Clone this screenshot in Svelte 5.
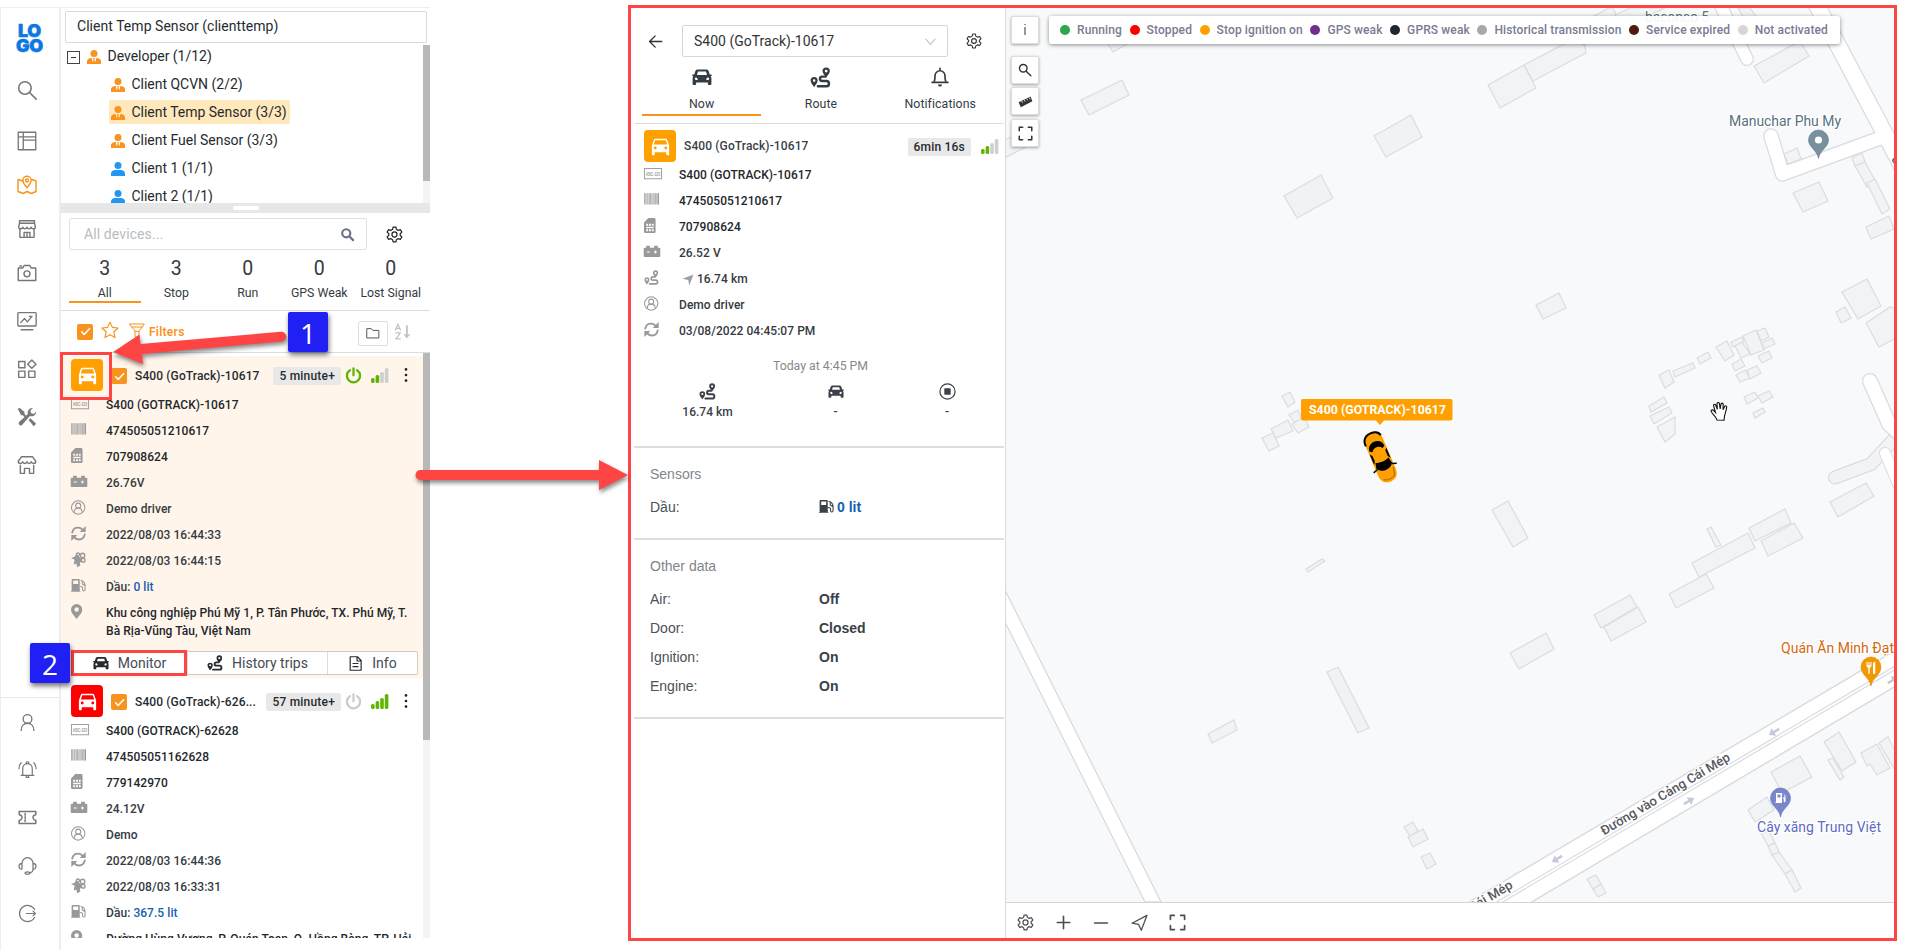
<script>
  const s = (inner, w = 1.6) =>
    `<g fill="none" stroke="currentColor" stroke-width="${w}" stroke-linecap="round" stroke-linejoin="round">${inner}</g>`;

  const icons = {
    search: s('<circle cx="9.5" cy="9.5" r="7.5"/><path d="M15 15 23 23"/>', 1.9),
    searchBold: s('<circle cx="10" cy="10" r="6.5"/><path d="M15.2 15.2 21 21"/>', 3.4),
    searchMap: s('<circle cx="9" cy="9" r="6.5"/><path d="M14 14 22 22"/>', 2.4),
    layout: s('<path d="M1.5 1.5h21v21h-21zM7.5 1.5v21M1.5 7h21M7.5 11h15"/>'),
    map: s('<path d="M7.5 7.5 1.2 5.4v14.4l6 2.4 5-2.4 5 2.4 5.6-2.4V7.2l-5-1.8"/><path d="M12 15.5C8.3 11 7 9 7 6.400a5 5 0 0 1 10 0C17 9 15.700 11 12 15.500z"/><circle cx="12" cy="6.500" r="1.800"/>', 1.7),
    shop: s('<path d="M3 2h18v3H3zM3 5 2 9.500c0 3 4.500 3 5 .3.500 2.700 4.500 2.700 5 0 .500 2.700 4.500 2.700 5 0 .500 2.700 5 2.700 5-.3L21 5M3.500 12.500V22h17v-9.500M8.500 22v-6h7v6M12 16v6"/>', 1.7),
    camera: s('<path d="M1.500 6h5.500l1.500-3h7L17 6h5.500v15h-21z"/><circle cx="12" cy="13" r="3.600"/><path d="M3.500 3.500h2"/>', 1.7),
    monitor: s('<rect x="1" y="2" width="22" height="16" rx="1"/><path d="M4.500 14 9 9l3.500 4L18 6.500M18 6.500h-3M5 22.500h14"/>', 1.6),
    widgets: s('<path d="M2 3h7.500v7.500H2zM2 14.500h7.500V22H2zM14 14.500h7.500V22H14zM17.800 1.200l5 5-5 5-5-5z"/>', 1.7),
    tools: '<path d="M1 2.500 3 1l6 5v2.500l4.500 4.300-2 2L7 10H5zM23 5.500a5.500 5.500 0 0 1-7.500 5.300L6 21.500A2.500 2.500 0 0 1 2.500 18L13 8.500A5.500 5.500 0 0 1 19 1.300l-3 3.200 1 3 3 .8zM14 15.500l2-2 7 6.500-3 3z" fill="currentColor"/>',
    store: s('<path d="M5.500 2h13l4 5.500c0 3.500-4.500 3.500-5.300.5-.700 3-4.500 3-5.200 0-.700 3-4.500 3-5.200 0C6 11 1.500 11 1.500 7.500zM4 12.500V22h5v-6h6v6h5v-9.500"/>', 1.7),
    user: s('<circle cx="12" cy="7.500" r="5.500"/><path d="M4 22c0-5 3-9 8-9s8 4 8 9"/>', 1.7),
    bellRing: s('<path d="M4 19.500h16M6 19.500v-9a6 6 0 0 1 12 0v9M10.500 4.500V2.500h3v2M10.500 20v2h3v-2M4 3.500C2 5.500 1.200 8 1.200 11M20 3.500c2 2 2.800 4.500 2.800 7.500"/>', 1.5),
    ticket: s('<path d="M1.500 4.500h21v4a3.500 3.500 0 0 0 0 7v4h-21v-4a3.500 3.500 0 0 0 0-7z"/><path d="M9 7v2M9 11v2M9 15v2"/>', 1.9),
    headset: s('<path d="M5 9.500a7 7.500 0 0 1 14 0M5 9.500v7c-5 .5-5-7.500 0-7zM19 9.500v7c5 .5 5-7.500 0-7zM19 16.500c0 3-2 4.500-4.500 5"/><ellipse cx="12" cy="21.500" rx="3" ry="1.500"/>', 1.6),
    logout: s('<path d="M21 7A10.200 10.200 0 1 0 21 17M10.500 12h11.500M19 9l3 3-3 3"/>', 1.5),
    gear: s('<circle cx="12" cy="12" r="3.600"/><path d="M10 1.500h4l.7 3.200 2.500 1.500 3.200-1 2 3.500L20 11v2l2.400 2.300-2 3.500-3.200-1-2.500 1.500-.7 3.200h-4l-.700-3.200-2.500-1.500-3.200 1-2-3.500L4 13v-2L1.600 8.700l2-3.500 3.200 1 2.500-1.500z"/>', 1.7),
    star: s('<path d="m12 1.500 3.200 7 7.600.8-5.700 5.100 1.600 7.600L12 18.200 5.300 22l1.600-7.600L1.200 9.300l7.600-.8z"/>', 1.6),
    funnel: s('<path d="M1 1.500h22l-8 11V23l-6-3v-7.500zM4.500 6h15M9 12.500h6"/>', 1.5),
    folder: s('<path d="M2 4.500h7l2.500 3H22v13H2z"/>', 1.7),
    sortAz: '<path d="M17 3h2.500v13H23l-5 6-4.700-6H17z" fill="currentColor"/>' + s('<path d="M2 10 5.500 1.500 9 10M3.300 7.500h4.400M2.500 14H9l-6.500 8.500H9"/>', 1.7),
    carFront: '<path fill-rule="evenodd" fill="currentColor" d="M18.900 5c-.2-.6-.8-1-1.400-1h-11c-.7 0-1.200.4-1.400 1L3 11v9c0 .6.400 1 1 1h1c.6 0 1-.4 1-1v-2h12v2c0 .6.400 1 1 1h1c.600 0 1-.4 1-1v-9zM6.500 15a1.500 1.500 0 1 1 0-3 1.500 1.500 0 0 1 0 3zm11 0a1.500 1.500 0 1 1 0-3 1.500 1.500 0 0 1 0 3zM5 10l1.500-4.500h11L19 10z"/>',
    car: '<path fill-rule="evenodd" fill="currentColor" d="M7 3h10c1.500 0 2.600.8 3.100 2.200L21.300 9h1.400c.8 0 1.200.6 1 1.300-.1.500-.5.800-1 .800h-.4c.700.700 1 1.500 1 2.400V20c0 .8-.6 1.500-1.500 1.500h-1.300c-.8 0-1.500-.6-1.500-1.500v-1.500H5V20c0 .9-.7 1.500-1.500 1.500H2.200c-.9 0-1.500-.7-1.500-1.500v-6.500c0-.9.300-1.700 1-2.400h-.4c-.5 0-.9-.3-1-.8C.100 9.600.500 9 1.300 9h1.400l1.200-3.800C4.400 3.800 5.500 3 7 3zM7.200 5.500 6 9.500h12l-1.200-4zM5 12.500a1.600 1.600 0 1 0 0 3.200c1 0 1.800 0 1.800-.8 0-1-.8-2.400-1.800-2.400zm14 0c-1 0-1.800 1.400-1.800 2.400 0 .8.8.8 1.800.8a1.600 1.600 0 1 0 0-3.200z"/>',
    route: '<path fill-rule="evenodd" fill="currentColor" d="M4.700 11.500a4 4 0 0 1 4 4c0 2.500-2.500 5.500-4 7.500-1.500-2-4-5-4-7.500a4 4 0 0 1 4-4zm0 2.500a1.500 1.500 0 1 0 0 3 1.500 1.500 0 0 0 0-3zM18.500.5a4.200 4.200 0 0 1 4.200 4.200c0 2.400-2.400 5-4.200 7-1.800-2-4.200-4.600-4.200-7A4.200 4.200 0 0 1 18.500.500zm0 2.500a1.600 1.600 0 1 0 0 3.200 1.600 1.600 0 0 0 0-3.200z"/>' + s('<path d="M17.500 11H14c-3.500 0-3.500 5 0 5h5c3.500 0 3.500 6 0 6H9"/>', 2.8),
    bell: s('<path d="M2.500 18.500h19M4.500 18.500C6 16.500 6 14 6 10.500a6 6 0 0 1 12 0c0 3.500 0 6 1.500 8M12 4V1.500"/>', 2) + '<path d="M9.500 21h5c-.3 2-1.300 2.500-2.500 2.500S9.800 23 9.500 21z" fill="currentColor"/>',
    back: s('<path d="M22 12H2.500M11.500 3 2.500 12l9 9"/>', 2.2),
    chevron: s('<path d="M2 6.500 12 18.500 22 6.500"/>', 2.4),
    doc: s('<path d="M3.500 1.200h11.500l6 6v15.600h-17.500zM14.500 1.500V8h6M8 12h8M8 17h8"/>', 1.9),
    power: s('<path d="M7 4.500a9.300 9.300 0 1 0 10 0M12 1.800v10"/>', 3.2),
    plate: '<rect x=".7" y="4" width="27.600" height="16.500" fill="none" stroke="currentColor" stroke-width="1.500"/><text x="3" y="15.500" font-size="8.500" font-family="Liberation Sans" font-weight="700" textLength="23" lengthAdjust="spacingAndGlyphs" fill="currentColor">ABC-123</text>',
    barcode: '<path fill="currentColor" opacity=".5" d="M0 2h2.500v18H0zM5 2h1v18H5zM8.500 2h3v18h-3zM14 2h1v18h-1zM17 2h3v18h-3z"/><path fill="currentColor" d="M22 2h2v18h-2z"/><path fill="currentColor" opacity=".45" d="M0 2h24v18H0z"/>',
    sim: '<path fill-rule="evenodd" fill="currentColor" d="M7 0h9c1.500 0 2.500 1 2.500 2.500v19c0 1.500-1 2.500-2.500 2.500H2.500C1 24 0 23 0 21.500V7zM3.500 9v3.500h3V9zm4.500 0v3.500h3V9zm4.500 0v3.500h3V9zM3.500 14v2.500h12V14zm0 4v3h3v-3zM8 18v3h3v-3zm4.500 0v3h3v-3z"/>',
    battery: '<path fill-rule="evenodd" fill="currentColor" d="M2.500 2.500h6V6h7V2.500h6V6H24c1 0 1.500.5 1.500 1.500v12c0 1-.500 1.500-1.500 1.500H0c-1 0-1.500-.5-1.500-1.500v-12C-1.500 6.500-1 6 0 6h2.500zM3.500 12v1.600h5V12zm13.200-1.700V12H15v1.600h1.700v1.700h1.600v-1.700H20V12h-1.700v-1.700z"/>',
    person: s('<circle cx="11.500" cy="12" r="10.700"/><circle cx="11.500" cy="9" r="4"/><path d="M5 19c.5-4 2-6 6.500-6s6 2 6.500 6"/>', 1.7),
    sync: s('<path d="M2 10.500C3 5 6.500 2.500 11 2.500c4 0 7 2 8.700 5.500M22 13.500C21 19 17.500 21.500 13 21.500c-4 0-7-2-8.700-5.500"/>', 3) + '<path d="M23.500 0v9.500H14zM.500 24v-9.500H10z" fill="currentColor"/>',
    satellite: '<path fill="currentColor" d="M0 9.500 5 8l4-4.500 8 7.500 1 3-4 3.500 1 4-5 3-1.500-6-4 1.500L5 16l1-3.500z"/>' + s('<circle cx="11" cy="4" r="2.500"/><circle cx="18.500" cy="5.500" r="3.500"/><circle cx="19.500" cy="13" r="3"/>', 2.2),
    fuel: '<path fill-rule="evenodd" fill="currentColor" d="M2.500 1.500h10c1 0 1.500.6 1.500 1.500v18.500H1V3c0-.9.500-1.500 1.500-1.500zM3.500 4v5.500h8V4zM0 21h15v1.500H0z"/>' + s('<path d="M16 3.500c4 1.500 6.500 4.500 6.500 8.500v6.500c0 3-4 3-4 0V16c0-2-1.500-2.500-3.500-2.500M18 5.500v4l4 2.500"/>', 1.7),
    pin: '<path fill-rule="evenodd" fill="currentColor" d="M9 0a9 9 0 0 1 9 9c0 5.500-5.500 9.500-9 15C5.500 18.500 0 14.500 0 9a9 9 0 0 1 9-9zm0 5.300a3.600 3.600 0 1 0 0 7.200 3.600 3.600 0 0 0 0-7.200z"/>',
    nav: '<path d="M1 9.500 23 1 14.500 23 12.500 12z" fill="currentColor"/>',
    navLine: s('<path d="M1.500 13 22.500 2 14.500 23 10.500 14.500z"/>', 1.8),
    stop: s('<circle cx="12" cy="12" r="10.700"/>', 1.7) + '<rect x="7.500" y="7.500" width="9" height="9" rx=".8" fill="currentColor"/>',
    corners: s('<path d="M2 7.500V2h5.500M16.500 2H22v5.500M22 16.500V22h-5.500M7.500 22H2v-5.500"/>', 2.4),
    ruler: '<path d="M1 13 20 4l3 7.500L4.500 21z" fill="currentColor"/><path d="m6 11 1.200 3M10 9l1.200 3M14 7l1.200 3M18 5.500l1.200 3" stroke="#fff" stroke-width="1.300"/>',
    plus: s('<path d="M12 2v20M2 12h20"/>', 2.6),
    minus: s('<path d="M1 12h22"/>', 2.6),
    manager: '<circle cx="12" cy="6" r="6" fill="currentColor"/><path fill="currentColor" d="M8 13.500c-5 0-8 2.500-8 6V24h24v-4.500c0-3.500-3-6-8-6l-2 8-1.200-5 .7-3h-3l.7 3-1.200 5z"/>',
    client: '<circle cx="12" cy="6" r="6" fill="currentColor"/><path fill="currentColor" d="M0 20c0-4 3-6.500 7.500-6.500h9c4.500 0 7.500 2.500 7.500 6.500v4H0z"/>',
    dots: '<g fill="currentColor"><circle cx="12" cy="2.500" r="2.300"/><circle cx="12" cy="12" r="2.300"/><circle cx="12" cy="21.500" r="2.300"/></g>',
    check: s('<path d="m5 12.500 4.500 5L19.500 7"/>', 3)
  };

  const navTop = [
    ['search', 27], ['layout', 31], ['map', 24], ['shop', 24], ['camera', 24],
    ['monitor', 28], ['widgets', 28], ['tools', 28], ['store', 28]
  ];
  const navBottom = [['user', 14], ['bellRing', 27], ['ticket', 28], ['headset', 28], ['logout', 28]];

  const tree = [
    { name: 'Client QCVN (2/2)', kind: 'manager' },
    { name: 'Client Temp Sensor (3/3)', kind: 'manager', active: true },
    { name: 'Client Fuel Sensor (3/3)', kind: 'manager' },
    { name: 'Client 1 (1/1)', kind: 'client' },
    { name: 'Client 2 (1/1)', kind: 'client' }
  ];

  const stats = [['3', 'All'], ['3', 'Stop'], ['0', 'Run'], ['0', 'GPS Weak'], ['0', 'Lost Signal']];

  const devices = [
    {
      title: 'S400 (GoTrack)-10617', ago: '5 minute+', color: '#ff9f00', on: true, bars: 2, selected: true,
      rows: [
        ['plate', 'S400 (GOTRACK)-10617'], ['barcode', '474505051210617'], ['sim', '707908624'],
        ['battery', '26.76V', 1], ['person', 'Demo driver', 1], ['sync', '2022/08/03 16:44:33', 1], ['satellite', '2022/08/03 16:44:15', 1]
      ],
      fuel: '0 lit',
      address: 'Khu công nghiệp Phú Mỹ 1, P. Tân Phước, TX. Phú Mỹ, T. Bà Rịa-Vũng Tàu, Việt Nam'
    },
    {
      title: 'S400 (GoTrack)-626...', ago: '57 minute+', color: '#ff0000', on: false, bars: 4,
      rows: [
        ['plate', 'S400 (GOTRACK)-62628'], ['barcode', '474505051162628'], ['sim', '779142970'],
        ['battery', '24.12V', 1], ['person', 'Demo', 1], ['sync', '2022/08/03 16:44:36', 1], ['satellite', '2022/08/03 16:33:31', 1]
      ],
      fuel: '367.5 lit',
      address: 'Đường Hùng Vương, P. Quán Toan, Q. Hồng Bàng, TP. Hải Phòng, Việt Nam'
    }
  ];

  const detail = [
    ['plate', 'S400 (GOTRACK)-10617'], ['barcode', '474505051210617'], ['sim', '707908624'],
    ['battery', '26.52 V', 1], ['route', '16.74 km', 1], ['person', 'Demo driver', 1], ['sync', '03/08/2022 04:45:07 PM', 1]
  ];
  const other = [['Air:', 'Off'], ['Door:', 'Closed'], ['Ignition:', 'On'], ['Engine:', 'On']];

  const legend = [
    ['#2ba84a', 'Running'], ['#ff0000', 'Stopped'], ['#ff9f00', 'Stop ignition on'], ['#6f2f8a', 'GPS weak'],
    ['#1f2830', 'GPRS weak'], ['#a9a9a9', 'Historical transmission'], ['#4d1a0d', 'Service expired'], ['#d6d6d6', 'Not activated']
  ];

  const buildings = [
    '1107,43 1113,52 1127,44 1120,34', '1081,100 1122,80 1129,95 1089,115',
    '1000,142 1026,131 1026,147 1000,160',
    '1488,85 1524,65 1536,88 1500,108', '1524,65 1583,34 1586,53 1533,81', '1575,26 1609,8 1613,8 1622,28 1583,45',
    '1615,15 1630,8 1665,8 1622,28', '1754,66 1800,41 1809,56 1764,83', '1738,8 1750,8 1770,35 1757,40',
    '1784,154 1797,148 1801,159 1788,164', '1793,193 1819,182 1828,201 1803,212',
    '1852,158 1862,153 1865,162 1855,166', '1855,166 1865,162 1875,180 1867,187', '1867,183 1875,179 1890,209 1882,214',
    '1866,227 1889,216 1894,229 1871,239', '1536,305 1559,293 1566,308 1543,319',
    '1842,292 1867,279 1881,306 1858,319', '1836,312 1845,307 1851,318 1841,323', '1866,323 1890,307 1898,309 1898,337 1879,347',
    '1282,396 1290,392 1295,402 1288,407', '1289,415 1298,410 1302,420 1294,422', '1271,429 1288,420 1293,431 1276,438',
    '1292,424 1304,417 1309,427 1298,433', '1262,438 1273,433 1279,446 1269,451',
    '1492,510 1508,501 1528,538 1513,547', '1306,569 1322,559 1325,561 1308,572',
    '1707,529 1711,527 1721,545 1716,547', '1692,563 1748,533 1755,548 1699,577', '1749,528 1785,509 1791,523 1755,541',
    '1761,541 1794,523 1803,538 1768,556', '1669,594 1706,574 1714,588 1676,608', '1830,502 1866,483 1874,496 1838,517',
    '1594,615 1630,595 1637,607 1601,628', '1604,627 1638,607 1646,622 1611,641',
    '1659,375 1669,370 1674,382 1665,388', '1673,371 1693,363 1695,368 1675,377', '1697,358 1708,352 1711,358 1700,364',
    '1716,347 1727,341 1734,355 1725,361', '1731,342 1742,337 1744,342 1733,347', '1735,346 1742,342 1750,354 1741,358',
    '1743,336 1756,330 1764,350 1751,355', '1757,331 1765,328 1769,337 1761,341', '1762,343 1772,338 1775,344 1764,349',
    '1758,356 1769,351 1772,358 1762,363', '1732,364 1741,359 1745,366 1735,371', '1736,375 1745,370 1750,378 1740,382',
    '1747,370 1757,366 1761,373 1750,379', '1744,397 1755,392 1758,398 1747,404', '1758,396 1769,391 1773,397 1762,403',
    '1753,413 1763,408 1765,412 1755,418', '1649,406 1664,397 1667,403 1651,412', '1650,416 1669,407 1672,413 1654,424',
    '1657,427 1675,417 1675,434 1665,442',
    '1510,653 1546,633 1554,649 1519,669', '1208,734 1234,720 1237,730 1212,743',
    '1587,879 1596,875 1601,884 1593,889', '1593,889 1601,884 1606,893 1598,897',
    '1771,772 1800,756 1812,777 1782,793', '1748,810 1767,797 1774,810 1755,822',
    '1761,833 1769,831 1775,843 1768,846', '1768,846 1775,843 1779,852 1772,855', '1772,855 1779,852 1792,870 1785,874',
    '1785,874 1792,870 1801,888 1795,892', '1824,742 1839,732 1856,762 1842,771', '1828,760 1833,758 1844,777 1840,780',
    '1861,753 1877,744 1890,768 1877,775 1870,764 1867,766', '1879,743 1888,737 1898,757 1898,775'
  ];
  const greenBuildings = [
    '1374,136 1411,115 1422,137 1386,157', '1284,196 1321,175 1333,198 1297,218',
    '1327,672 1338,667 1369,728 1358,733', '1404,827 1413,822 1418,831 1410,836',
    '1408,837 1423,829 1428,839 1413,847', '1421,857 1430,853 1436,864 1427,869'
  ];
  const roadArrows = [[1774, 732, 149], [1557, 859, 149], [1689, 801, -31], [1893, 680, -31]];
</script>

{#snippet icon(name, w = 16, h = w, vb = '0 0 24 24')}
  <svg class="ic" width={w} height={h} viewBox={vb}>{@html icons[name]}</svg>
{/snippet}

{#snippet rowIcon(name)}
  <span class="rowicon">
    {#if name === 'plate'}{@render icon('plate', 18, 15, '0 0 29 24')}
    {:else if name === 'battery'}{@render icon('battery', 16, 15, '-1 0 26 24')}
    {:else}{@render icon(name, 15)}{/if}
  </span>
{/snippet}

{#snippet signal(n)}
  <svg class="ic" width="18" height="15" viewBox="0 0 18 15">
    {#each [5, 8, 11, 15] as h, i}
      <rect x={i * 4.6} y={15 - h} width="3.600" height={h} rx="1.500" fill={i < n ? '#5fb404' : '#cfcfcf'} />
    {/each}
  </svg>
{/snippet}

<div class="page">
  <nav class="side">
    <div class="logo"><span>LO</span><span>GO</span></div>
    {#each navTop as [name, gap]}
      <div class="navitem" class:on={name === 'map'} style="margin-top:{gap}px">{@render icon(name, 20)}</div>
    {/each}
    <div class="bottomnav">
      {#each navBottom as [name, gap]}
        <div class="navitem" style="margin-top:{gap}px">{@render icon(name, 19)}</div>
      {/each}
    </div>
  </nav>

  <section class="devices">
    <div class="account">Client Temp Sensor (clienttemp)</div>
    <div class="tree">
      <div class="nodes">
        <div class="node root"><span class="toggle"></span><span class="who">{@render icon('manager', 14, 16, '0 0 24 24')}</span>Developer (1/12)</div>
        {#each tree as t}
          <div class="node" class:active={t.active}>
            <span class="who" class:blue={t.kind === 'client'}>{@render icon(t.kind, 14, 16)}</span>{t.name}
          </div>
        {/each}
      </div>
      <div class="track"><div class="thumb"></div></div>
    </div>
    <div class="splitter"><span></span></div>

    <div class="searchrow">
      <div class="search">All devices...<span>{@render icon('searchBold', 15)}</span></div>
      {@render icon('gear', 17)}
    </div>
    <div class="stats">
      {#each stats as [n, label], i}
        <div class="stat" class:on={i === 0}><b>{n}</b><span>{label}</span></div>
      {/each}
    </div>
    <div class="filters">
      <span class="cb">{@render icon('check', 13)}</span>
      <span class="o star">{@render icon('star', 18)}</span>
      <span class="o fun">{@render icon('funnel', 16)}</span>
      <b>Filters</b>
      <span class="folder">{@render icon('folder', 14)}</span>
      <span class="az">{@render icon('sortAz', 17)}</span>
    </div>

    <div class="list">
      <div class="cards">
        {#each devices as d}
          <article class="card" class:selected={d.selected}>
            <header>
              <span class="square" style="background:{d.color}">{@render icon('carFront', 23)}</span>
              <span class="cb">{@render icon('check', 13)}</span>
              <strong>{d.title}</strong>
              <span class="pill">{d.ago}</span>
              <span class="pw" class:live={d.on}>{@render icon('power', 17)}</span>
              {@render signal(d.bars)}
              <span class="dots">{@render icon('dots', 14)}</span>
            </header>
            {#each d.rows as [ic, text, soft]}
              <div class="row" class:soft>{@render rowIcon(ic)}{text}</div>
            {/each}
            <div class="row soft">{@render rowIcon('fuel')}Dầu:&nbsp;<em>{d.fuel}</em></div>
            <div class="row addr">{@render rowIcon('pin')}<span>{d.address}</span></div>
            {#if d.selected}
              <div class="actions">
                <span>{@render icon('car', 16)}<i>Monitor</i></span>
                <span>{@render icon('route', 16)}<i>History trips</i></span>
                <span>{@render icon('doc', 15)}<i>Info</i></span>
              </div>
            {/if}
          </article>
        {/each}
      </div>
      <div class="track"><div class="thumb"></div></div>
    </div>
  </section>

  <main class="frame">
    <section class="detail">
      <div class="pick">
        <span class="back">{@render icon('back', 15)}</span>
        <div class="select">S400 (GoTrack)-10617<span>{@render icon('chevron', 11)}</span></div>
        {@render icon('gear', 16)}
      </div>
      <div class="tabs">
        <div class="tab on">{@render icon('car', 20)}<span>Now</span></div>
        <div class="tab">{@render icon('route', 21)}<span>Route</span></div>
        <div class="tab">{@render icon('bell', 20)}<span>Notifications</span></div>
      </div>
      <div class="unit">
        <header>
          <span class="square" style="background:#ff9f00">{@render icon('carFront', 23)}</span>
          <strong>S400 (GoTrack)-10617</strong>
          <span class="pill">6min 16s</span>
          {@render signal(2)}
        </header>
        {#each detail as [ic, text, soft]}
          <div class="row" class:soft>
            {@render rowIcon(ic)}{#if ic === 'route'}<span class="navarrow">{@render icon('nav', 12)}</span>{/if}{text}
          </div>
        {/each}
        <div class="today">Today at 4:45 PM</div>
        <div class="totals">
          <div>{@render icon('route', 17)}<b>16.74 km</b></div>
          <div>{@render icon('car', 16, 17)}<b>-</b></div>
          <div>{@render icon('stop', 17)}<b>-</b></div>
        </div>
      </div>
      <div class="block sensors">
        <h3>Sensors</h3>
        <div class="kv"><span>Dầu:</span><b>{@render icon('fuel', 15)}<em>0 lit</em></b></div>
      </div>
      <div class="block">
        <h3>Other data</h3>
        {#each other as [k, v]}
          <div class="kv"><span>{k}</span><b>{v}</b></div>
        {/each}
      </div>
    </section>

    <section class="mapwrap">
      <div class="map">
        <svg class="canvas" width="888" height="894" viewBox="1006 8 888 894">
          <g fill="#f1f3f4" stroke="#dadce0" stroke-width="1.200">
            {#each buildings as p}<polygon points={p} />{/each}
          </g>
          <g fill="#eff3f4" stroke="#dadce0" stroke-width="1.200">
            {#each greenBuildings as p}<polygon points={p} />{/each}
          </g>
          <path d="M1898 435 1871 464 1835 477.500" fill="none" stroke="#d5d8de" stroke-width="14" stroke-linecap="round" stroke-linejoin="round" />
          <path d="M1898 435 1871 464 1835 477.500" fill="none" stroke="#f1f3f4" stroke-width="12" stroke-linecap="round" stroke-linejoin="round" />
          <g fill="none" stroke="#d9dbe1" stroke-linecap="round" stroke-linejoin="round">
            <path d="M1714 -8 1747 59" stroke-width="14" /><path d="M1813 -2 1905 172" stroke-width="18" />
            <path d="M1771 136 1782.500 174 1886 136" stroke-width="15.500" />
            <path d="M1870 381 1889 424 1902 436" stroke-width="16" /><path d="M1885 453 1904 498" stroke-width="12" />
          </g>
          <g fill="none" stroke="#fff" stroke-linecap="round" stroke-linejoin="round">
            <path d="M1714 -8 1747 59" stroke-width="11.500" /><path d="M1813 -2 1905 172" stroke-width="15.500" />
            <path d="M1771 136 1782.500 174 1886 136" stroke-width="13" />
            <path d="M1870 381 1889 424 1902 436" stroke-width="13.500" /><path d="M1885 453 1904 498" stroke-width="10" />
          </g>
          <path d="M1004 588 1161 902H1145L1004 620z" fill="#fff" stroke="#d9dbe1" stroke-width="1.300" />
          <path d="M1467 903 1896 650V686L1530 903z" fill="#fff" stroke="#dadce0" stroke-width="1.500" />
          <path d="M1495 903 1896 665.500M1501 903 1896 669" stroke="#d9dbe0" stroke-width="1.200" />
          {#each roadArrows as [x, y, r]}
            <path transform="translate({x} {y}) rotate({r})" d="M-6 -1.300H0V-4.500L6 0 0 4.500V1.300H-6z" fill="#c6c9de" />
          {/each}
          <g class="road">
            <text transform="translate(1604 835.500) rotate(-30.800)" textLength="148" lengthAdjust="spacingAndGlyphs">Đường vào Cảng Cái Mép</text>
            <text transform="translate(1471.500 912.500) rotate(-30.800)" textLength="49" lengthAdjust="spacingAndGlyphs">Cái Mép</text>
            <text transform="translate(1891 159) rotate(60)">d</text>
          </g>
          <g class="poi">
            <text x="1645" y="22" textLength="64" fill="#57717d">baconco 5</text>
            <text x="1729" y="126" textLength="112" fill="#57717d">Manuchar Phu My</text>
            <text x="1781" y="653" textLength="113" fill="#d2690e">Quán Ăn Minh Đạt</text>
            <text x="1757" y="832" textLength="124" fill="#5c6bc0">Cây xăng Trung Việt</text>
          </g>
          <path d="M1818.500 158.500C1817 150 1808.500 147 1808.500 140a10 10 0 0 1 20 0C1828.500 147 1820 150 1818.500 158.500z" fill="#78909c" stroke="#607d8b" stroke-width=".6" />
          <circle cx="1818.500" cy="140" r="3.600" fill="#fff" />
          <path d="M1871 686C1870 678 1861 675 1861 667a10 10 0 0 1 20 0C1881 675 1872 678 1871 686z" fill="#f29900" stroke="#e08a00" stroke-width=".6" />
          <path d="M1866.500 662v3.500c0 1.500 1 2 1.800 2.200v6h1.400v-6c.8-.2 1.800-.700 1.800-2.200V662h-1v3.300h-1V662h-1v3.300h-1V662zM1873 673.700V663.500c0-1 1.500-1.700 2.300-1.700v11.900z" fill="#fff" />
          <path d="M1780.500 817C1779.500 809 1770.500 806 1770.500 798a10 10 0 0 1 20 0C1790.500 806 1781.500 809 1780.500 817z" fill="#7986cb" stroke="#5c6bc0" stroke-width=".6" />
          <path fill-rule="evenodd" d="M1776 793h6v10h-6.500v-1.200h.5zM1777.500 794.500v3h3v-3zM1783 793.500l2.500 2v6c0 1-1.800 1-1.800 0v-3h-1v-1h1.800v-2z" fill="#fff" />

          <g class="tag">
            <path d="M1303 399h147.500a2 2 0 0 1 2 2v17.500a2 2 0 0 1-2 2H1384l-4 4.500-4-4.500h-73a2 2 0 0 1-2-2V401a2 2 0 0 1 2-2z" fill="#ff9f00" />
            <text x="1309" y="414" textLength="137" lengthAdjust="spacingAndGlyphs">S400 (GOTRACK)-10617</text>
          </g>
          <g transform="translate(1380.500 457) rotate(-23)">
            <path d="M-9.500 -17C-9.500 -24 -5 -26.500 0 -26.500S9.500 -24 9.500 -17V16C9.500 24 5 26.500 0 26.500S-9.500 24 -9.500 16z" fill="#ff9f00" />
            <path d="M-9.300 -15.500C-9.800 -23 -5 -25.700 0 -25.700S8 -24.500 8.800 -20" fill="none" stroke="#000" stroke-width="2" />
            <path d="M-8 -9C-8 -19 8 -19 8 -9L5.500 -7.500C3 -11.500 -3 -11.500 -5.500 -7.500zM-7 3.500C-3 5.500 3 5.500 7 3.500L8.500 9.500C5 15.500 -5 15.500 -8.500 9.500zM-9 -6.500l2 2.500V2l-2 3zM9 -6.500l-2 2.500V2l2 3z" fill="#000" />
            <path d="M-12.500 12 -8 10.500M12.500 12 8 10.500" stroke="#000" stroke-width="1.500" />
            <path d="M-6 22C-3 24.500 3 24.500 6 22L8 14" fill="none" stroke="#8a5a00" stroke-width=".7" />
          </g>
          <path d="M1716.500 419.500C1715 415 1711 413 1710.500 410.500c.5-1.500 2-1.500 3 0l1.500 1.500-2-7c0-1.700 1.800-1.700 2.300-.3l1.500 4-.300-5.700c.3-1.400 2-1.400 2.400 0l.8 5.500.8-5c.5-1.200 2-1.200 2.200.2l-.2 5.500 1.700-3.500c.9-.9 2.200-.2 2 1-.7 5-1.700 6-2.200 9l-.5 4z" transform="translate(.5 .5)" fill="#fff" stroke="#111" stroke-width="1.100" />
        </svg>
        <div class="mapbtns">
          <span class="first">i</span>
          <span>{@render icon('searchMap', 14)}</span>
          <span>{@render icon('ruler', 15)}</span>
          <span class="last">{@render icon('corners', 15)}</span>
        </div>
        <div class="legend">
          {#each legend as [c, label]}
            <span><i style="background:{c}"></i>{label}</span>
          {/each}
        </div>
      </div>
      <div class="mapbar">
        {@render icon('gear', 17)}{@render icon('plus', 15)}{@render icon('minus', 14)}{@render icon('navLine', 17)}{@render icon('corners', 17)}
      </div>
    </section>
  </main>

  <div class="mark box1"></div>
  <div class="mark box2"></div>
  <svg class="arrows" width="640" height="500" viewBox="0 0 640 500">
    <g class="shade" fill="#ff4444">
      <path d="M113 352 139.500 334.500 140.500 344 281 331.800a4.800 4.800 0 0 1 .9 9.700L142 354l1 10z" />
      <path d="M420.500 470H599V460L628 475 599 490V480H420.500a5 5 0 0 1 0-10z" />
    </g>
  </svg>
  <div class="step one">1</div>
  <div class="step two">2</div>
</div>

<style>
  :global(body) { margin: 0; background: #fff; }
  .page { position: relative; width: 1905px; height: 950px; overflow: hidden; display: flex; box-sizing: border-box; padding-top: 7px; font-family: Roboto, "Noto Sans", sans-serif; font-size: 14px; color: #262b30; background: #fff; }
  .page :global(*) { box-sizing: border-box; }
  .ic { display: block; flex: none; overflow: visible; }

  .side { width: 61px; flex: none; height: 943px; border: 1px solid #eee; border-width: 1px 2px 0 1px; display: flex; flex-direction: column; align-items: center; padding: 15px 6px 0 0; color: #777; }
  .logo { flex: none; width: 30px; height: 30px; margin-right: -5px; display: flex; flex-direction: column; align-items: center; font: 900 18px/15px Inter, sans-serif; letter-spacing: -.3px; color: #0b78e3; -webkit-text-stroke: .5px #0b78e3; }
  .logo span { height: 15px; }
  .navitem { height: 20px; width: 20px; display: flex; align-items: center; justify-content: center; flex: none; }
  .navitem.on { color: #f7931e; }
  .bottomnav { margin-top: auto; height: 253px; border-top: 1px solid #e8e8e8; width: 58px; margin-right: -6px; padding-right: 6px; display: flex; flex-direction: column; align-items: center; flex: none; }

  .devices { width: 369px; flex: none; height: 931px; display: flex; flex-direction: column; border-top: 1px solid #eee; }
  .account { margin: 3px 3px 0 4px; height: 32px; flex: none; border: 1px solid #d9d9d9; border-radius: 2px; padding-left: 11px; line-height: 29px; letter-spacing: .04px; }
  .tree { height: 160px; flex: none; display: flex; justify-content: space-between; padding-top: 2px; overflow: hidden; }
  .nodes { height: 158px; margin-top: -1px; }
  .node { height: 24px; margin: 0 0 4px 48px; width: max-content; padding: 0 3px 0 2px; display: flex; align-items: center; border-radius: 2px; letter-spacing: -.02px; }
  .node.root { margin-left: 6px; padding: 0; }
  .node.active { background: #ffe8bb; }
  .who { color: #f7931e; margin: 2px 6.500px 0 0; }
  .who.blue { color: #2196f3; }
  .toggle { width: 13px; height: 13px; border: 1px solid #444; display: flex; align-items: center; justify-content: center; margin: 2px 7px 0 0; }
  .toggle::before { content: ""; width: 5px; height: 1px; background: #333; }
  .track { width: 7px; flex: none; background: #f3f3f3; }
  .thumb { background: #b8b8b8; height: 136px; }
  .splitter { height: 10px; flex: none; background: #e7e7e7; display: flex; align-items: center; justify-content: center; }
  .splitter span { width: 26px; height: 4px; border-radius: 2px; background: #fff; }

  .searchrow { display: flex; align-items: center; padding: 5px 8px 0; height: 37px; flex: none; gap: 19px; color: #222; }
  .search { width: 298px; height: 32px; border: 1px solid #dfe1e8; border-radius: 2px; display: flex; align-items: center; justify-content: space-between; padding: 0 11px 0 14px; color: #b9bcc0; letter-spacing: .1px; }
  .search span { color: #6b7086; }
  .stats { display: flex; height: 61px; flex: none; border-bottom: 1px solid #ddd; padding: 7px 0 0 8px; }
  .stat { width: 71.500px; height: 46px; display: flex; flex-direction: column; align-items: center; white-space: nowrap; flex: none; }
  .stat.on { border-bottom: 2px solid #f7931e; }
  .stat b { font-weight: 400; font-size: 19.500px; line-height: 23px; color: #333a42; }
  .stat span { font-size: 12.300px; line-height: 16px; margin-top: 4.500px; color: #333a42; }
  .filters { display: flex; align-items: center; height: 42px; flex: none; border-bottom: 1px solid #ddd; padding-left: 16px; }
  .filters b { font-size: 12px; font-weight: 600; color: #f9951f; letter-spacing: .25px; width: 60px; margin: 1px 149px 0 4px; }
  .cb { width: 16px; height: 16px; background: #f7931e; border-radius: 2px; color: #fff; display: flex; align-items: center; justify-content: center; flex: none; }
  .o { color: #f7931e; margin-top: -4px; }
  .star { margin-left: 8px; }
  .fun { margin: -2px 0 0 10px; }
  .folder { width: 30px; height: 25px; margin-top: 3px; border: 1px solid #ddd; border-radius: 2px; display: flex; align-items: center; justify-content: center; color: #555; }
  .az { margin-left: 6px; color: #c2c2c2; }

  .list { flex: 1; min-height: 0; display: flex; overflow: hidden; }
  .list .thumb { height: 387px; }
  .cards { width: 362px; padding-top: 3px; }
  .card { height: 322px; margin-bottom: 4px; padding: 3px 5px 0 10px; }
  .card.selected { background: #fff5ea; }
  header { display: flex; align-items: center; height: 32px; }
  .card header { margin-bottom: 1px; }
  strong { font-weight: 500; font-size: 12px; white-space: nowrap; letter-spacing: .12px; margin-top: 2px; }
  .square { width: 32px; height: 32px; border-radius: 4px; color: #fff; display: flex; align-items: center; justify-content: center; flex: none; }
  .card .cb { margin: 2px 8px 0 8px; }
  .pill { margin-left: auto; background: #e8e8e8; border-radius: 2px; height: 18px; line-height: 18px; padding: 0 6px; font-size: 12px; font-weight: 500; letter-spacing: .2px; margin-top: 2px; white-space: nowrap; }
  .pw { color: #ccc; margin: 0 9px 0 4px; }
  .pw.live { color: #5fb404; }
  .dots { margin: 0 5px 0 10px; color: #222; }
  .row { height: 26px; display: flex; align-items: center; font-size: 12px; font-weight: 500; white-space: nowrap; color: #23272b; letter-spacing: .05px; }
  .row.soft { color: #353b42; }
  .rowicon { width: 35px; height: 19px; color: #999; flex: none; }
  .row em, .kv em { font-style: normal; color: #1560b0; }
  .addr { height: 44px; align-items: flex-start; padding-top: 4px; white-space: normal; line-height: 18px; color: #23272b; }
  .addr span:last-child { width: 312px; }
  .actions { display: flex; margin-top: 7px; width: 347px; height: 24px; border: 1px solid #ccc; border-radius: 2px; background: #fff; }
  .actions span { display: flex; align-items: center; justify-content: center; gap: 9px; width: 116px; border-right: 1px solid #ddd; flex: none; }
  .actions span:nth-child(2) { width: 140px; }
  .actions span:nth-child(3) { width: 89px; border: 0; }
  .actions i { font-style: normal; color: #444b52; font-weight: 400; }

  .frame { margin: -2px 0 0 198px; width: 1269px; height: 936px; border: 3px solid #ff4444; display: flex; flex: none; }
  .detail { width: 375px; border-right: 1px solid #d5d8dc; padding: 0 1px 0 3px; flex: none; }
  .pick { display: flex; align-items: center; padding: 17px 0 0 14px; color: #333; height: 49px; }
  .back { margin-right: 19px; }
  .select { width: 266px; height: 32px; border: 1px solid #d6d6d6; border-radius: 2px; padding: 0 11px; display: flex; align-items: center; justify-content: space-between; margin-right: 18px; color: #333; }
  .select span { color: #bbb; }
  .tabs { display: flex; border-bottom: 1px solid #ddd; height: 67px; padding: 10px 0 0 8px; color: #343c44; }
  .tab { width: 119.300px; flex: none; height: 49px; display: flex; flex-direction: column; align-items: center; justify-content: flex-start; font-size: 12.300px; }
  .tab span { margin-top: auto; line-height: 14px; padding-bottom: 3px; letter-spacing: .1px; }
  .tab:not(.on) { border-bottom: 2px solid transparent; }
  .tab.on { border-bottom: 2px solid #f7931e; }
  .unit { padding: 6px 5px 0 10px; height: 324px; border-bottom: 2px solid #ddd; }
  .unit strong { margin: 0 0 0 8px; color: #3a4148; }
  .unit .pill { margin-right: 10px; margin-top: 1px; }
  .navarrow { color: #9aa0a6; margin: 2px 3px 0 3px; }
  .today { text-align: center; font-size: 12.300px; color: #85898d; margin: 14px 2px 0 0; line-height: 16px; }
  .totals { display: grid; grid-template-columns: 127px 129px 94px; justify-items: center; margin-top: 9px; color: #3a4148; }
  .totals div { display: flex; flex-direction: column; align-items: center; gap: 4px; }
  .totals b { font-weight: 500; font-size: 12px; line-height: 17px; }
  .block { font-family: "Liberation Sans", Arial, sans-serif; padding: 17px 16px 0; height: 179px; border-bottom: 2px solid #ddd; }
  .block.sensors { height: 92px; }
  h3 { margin: 0 0 9px; font-size: 14px; line-height: 18px; font-weight: 400; color: #7f858b; }
  .kv { display: flex; height: 29px; align-items: center; color: #4a5157; }
  .kv span { width: 169px; }
  .kv b { display: flex; align-items: center; gap: 3px; color: #3a4148; }

  .mapwrap { flex: 1; display: flex; flex-direction: column; }
  .map { position: relative; height: 894px; background: #f8f9fb; overflow: hidden; }
  .canvas { display: block; }
  .road text { font: 500 13px Roboto, sans-serif; fill: #55585e; stroke: #fff; stroke-width: 2.500px; paint-order: stroke; }
  .poi text { font: 400 14px Roboto, sans-serif; stroke: #fff; stroke-width: 2.500px; paint-order: stroke; }
  .tag text { font: 700 12.500px Roboto, sans-serif; fill: #fff; }
  .mapbtns { position: absolute; left: 5px; top: 8px; display: flex; flex-direction: column; gap: 3px; }
  .mapbtns span { width: 28px; height: 28px; background: #fff; border: 1px solid #ddd; border-radius: 2px; box-shadow: 0 1px 3px rgba(0,0,0,.35); display: flex; align-items: center; justify-content: center; color: #333; }
  .mapbtns .first { margin-bottom: 9px; color: #222; font-size: 15px; font-weight: 300; }
  .mapbtns .last { margin-top: 1px; }
  .legend { position: absolute; left: 43px; top: 8px; width: 791px; height: 28px; background: rgba(255,255,255,.93); border-radius: 3px; box-shadow: 0 1px 4px rgba(0,0,0,.45); display: flex; align-items: center; justify-content: space-between; padding: 0 12px 0 11px; font-size: 12px; font-weight: 500; color: #7a7a92; }
  .legend span { display: flex; align-items: center; gap: 7px; white-space: nowrap; letter-spacing: .12px; }
  .legend i { width: 10px; height: 10px; border-radius: 50%; }
  .mapbar { flex: 1; border-top: 1px solid #d5d5d5; background: #fff; display: grid; grid-template-columns: repeat(5, 38px); align-items: center; justify-items: center; color: #4a4f55; padding-top: 4px; }

  .mark { position: absolute; border: 3px solid #ff4444; }
  .box1 { left: 60px; top: 352px; width: 52px; height: 48px; }
  .box2 { left: 71px; top: 650px; width: 116px; height: 26px; }
  .arrows { position: absolute; left: 0; top: 0; }
  .shade { filter: drop-shadow(1px 3px 2px rgba(0,0,0,.45)); }
  .step { position: absolute; width: 40px; height: 40px; background: #2020f5; color: #fff; border-radius: 2px; display: flex; align-items: center; justify-content: center; font: 28px/40px "Open Sans", sans-serif; padding-top: 1px; box-shadow: 1px 3px 5px rgba(0,0,0,.55); }
  .one { left: 288px; top: 312px; }
  .two { left: 30px; top: 643px; }
</style>
